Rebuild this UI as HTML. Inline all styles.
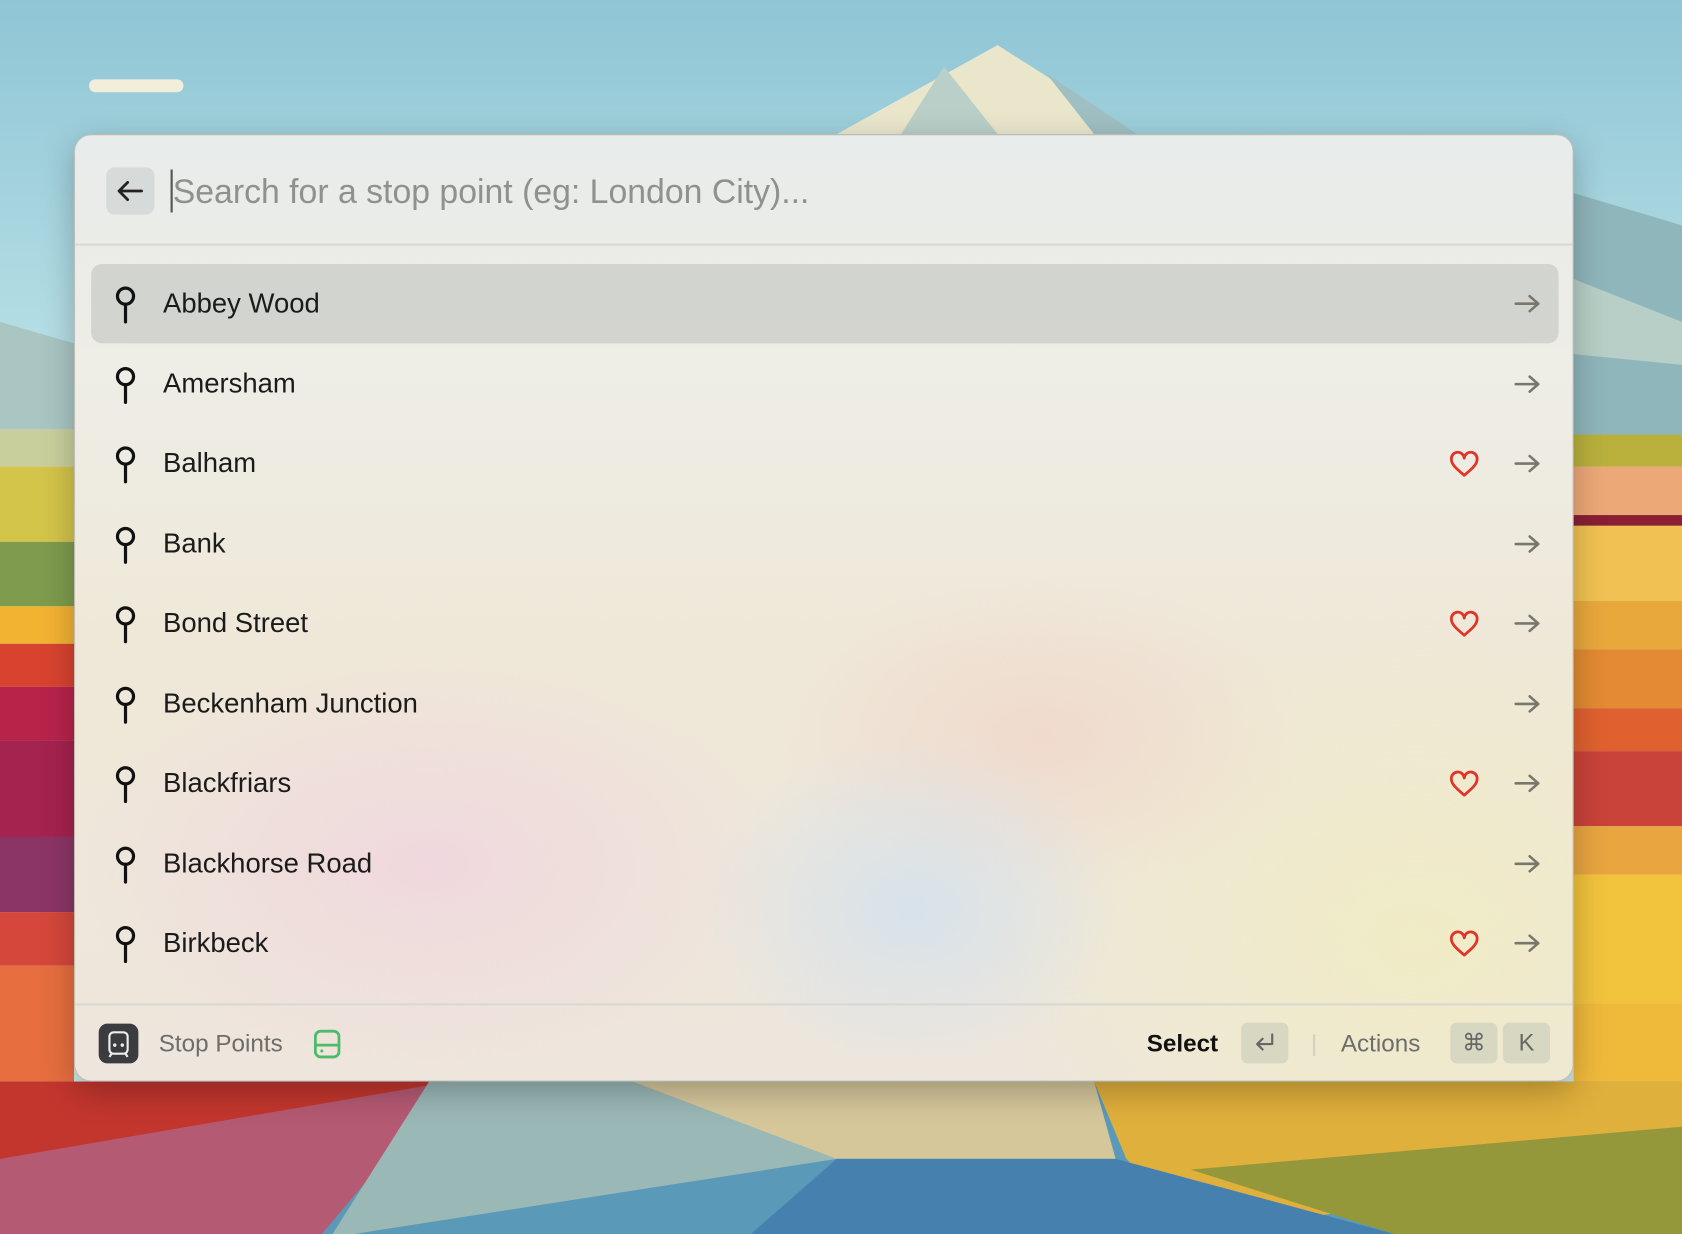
<!DOCTYPE html>
<html><head><meta charset="utf-8"><style>
*{margin:0;padding:0;box-sizing:border-box}
html,body{width:1682px;height:1234px;overflow:hidden;background:#9ccbd6}
#s{width:1568px;height:1150px;transform:scale(1.07270,1.07304);transform-origin:0 0;position:relative;font-family:"Liberation Sans",sans-serif}
svg.bg{position:absolute;left:0;top:0}
.win{position:absolute;left:69px;top:125px;width:1398px;height:883px;border-radius:16px;overflow:hidden;border:1px solid rgba(60,60,60,.25);box-shadow:0 10px 30px rgba(0,0,0,.25);
background:
radial-gradient(ellipse 200px 160px at 780px 720px,rgba(214,226,236,.95),rgba(214,226,236,0)),
radial-gradient(ellipse 330px 200px at 330px 680px,rgba(240,214,222,.9),rgba(240,214,222,0)),
radial-gradient(ellipse 250px 150px at 900px 560px,rgba(240,212,200,.7),rgba(240,212,200,0)),
radial-gradient(ellipse 400px 300px at 1250px 750px,rgba(240,236,196,.95),rgba(240,236,196,0)),
linear-gradient(180deg,#e8ecea 0%,#eeede6 25%,#efe8d8 55%,#eee6dc 100%)}
.hdr{position:absolute;left:0;top:0;width:100%;height:103px;border-bottom:2px solid #d8d8d4}
.back{position:absolute;left:29px;top:30px;width:45px;height:44px;border-radius:8px;background:#d6dad9}
.ph{position:absolute;left:91px;top:32px;font-size:31.5px;color:#8f918f;line-height:40px}
.cur{position:absolute;left:89px;top:32px;width:2px;height:40px;background:#555}
.row{position:absolute;left:15px;width:1368px;height:74px;border-radius:10px}
.row.sel{background:rgba(190,192,188,.55)}
.row svg.pin{position:absolute;left:22px;top:20px}
.row .t{position:absolute;left:67px;top:0;line-height:74px;font-size:25.6px;color:#1b1b1b}
.row svg.ar{position:absolute;left:1326px;top:27px}
.row svg.ht{position:absolute;left:1265px;top:25px}
.ftr{position:absolute;left:0;top:809px;width:100%;height:74px;border-top:2px solid #d9d8d2}
.fi{position:absolute;left:22px;top:17px;width:37px;height:37px;border-radius:8px;background:#3a3c3f}
.ft{position:absolute;top:0;line-height:72px;font-size:22.6px;color:#6d6d6a}
.key{position:absolute;top:16px;height:38px;border-radius:6px;background:#d8d8c2;color:#666;font-size:22px;text-align:center;line-height:38px}
</style></head><body><div id="s">
<svg class="bg" width="1568" height="1150" viewBox="0 0 1568 1150">
<defs><linearGradient id="sky" x1="0" y1="0" x2="0" y2="1"><stop offset="0" stop-color="#8fc5d5"/><stop offset=".3" stop-color="#b8e0e6"/><stop offset=".5" stop-color="#cde9e8"/></linearGradient></defs>
<rect width="1568" height="1150" fill="url(#sky)"/>
<polygon points="780,125 930,42 1060,125" fill="#e9e6cc"/>
<polygon points="880,62 840,125 930,125" fill="#b9cfc8"/>
<polygon points="975,68 1060,125 1020,125" fill="#9fbfc3"/>
<polygon points="1467,180 1568,210 1568,420 1467,420" fill="#8fb6bb"/>
<polygon points="1467,260 1568,300 1568,340 1467,330" fill="#b7cfc6"/>
<rect x="1467" y="405" width="101" height="30" fill="#b9b13c"/>
<rect x="1467" y="435" width="101" height="45" fill="#eda878"/>
<rect x="1467" y="480" width="101" height="10" fill="#8a1f33"/>
<rect x="1467" y="490" width="101" height="70" fill="#f1c253"/>
<rect x="1467" y="560" width="101" height="45" fill="#e9a83c"/>
<rect x="1467" y="605" width="101" height="55" fill="#e38a32"/>
<rect x="1467" y="660" width="101" height="40" fill="#e0612f"/>
<rect x="1467" y="700" width="101" height="70" fill="#c9433a"/>
<rect x="1467" y="770" width="101" height="45" fill="#e9a540"/>
<rect x="1467" y="815" width="101" height="120" fill="#f2c33c"/>
<rect x="1467" y="935" width="101" height="80" fill="#efb93a"/>
<polygon points="0,300 69,320 69,400 0,400" fill="#a9c6c3"/>
<rect x="0" y="400" width="69" height="35" fill="#c9cf9c"/>
<rect x="0" y="435" width="69" height="70" fill="#d3c44a"/>
<rect x="0" y="505" width="69" height="60" fill="#7e9b4e"/>
<rect x="0" y="565" width="69" height="35" fill="#f2b232"/>
<rect x="0" y="600" width="69" height="40" fill="#d8432f"/>
<rect x="0" y="640" width="69" height="50" fill="#b8234a"/>
<rect x="0" y="690" width="69" height="90" fill="#a4234f"/>
<rect x="0" y="780" width="69" height="70" fill="#8b3567"/>
<rect x="0" y="850" width="69" height="50" fill="#d5473b"/>
<rect x="0" y="900" width="69" height="110" fill="#e66e3f"/>
<rect x="0" y="1008" width="1568" height="142" fill="#5a9ab8"/>
<polygon points="0,1008 420,1008 300,1150 0,1150" fill="#b55a73"/>
<polygon points="0,1008 420,1008 0,1080" fill="#c3362e"/>
<polygon points="400,1008 620,1008 780,1080 330,1150 310,1150" fill="#9ab8b6"/>
<polygon points="590,1008 1020,1008 1040,1080 780,1080" fill="#d6c79b"/>
<polygon points="1020,1008 1568,1008 1568,1080 1120,1150 1050,1080" fill="#e0b03c"/>
<polygon points="1110,1090 1568,1050 1568,1150 1300,1150" fill="#94983b"/>
<polygon points="780,1080 1040,1080 1300,1150 700,1150" fill="#4680ae"/>
<rect x="83" y="74" width="88" height="12" rx="6" fill="#f1efdc"/>
</svg>
<div class="win">
 <div class="hdr">
  <div class="back"><svg width="45" height="44" viewBox="0 0 45 44"><path d="M33 22H12M20 14l-8 8 8 8" fill="none" stroke="#222" stroke-width="2.6" stroke-linecap="round" stroke-linejoin="round"/></svg></div>
  <div class="cur"></div>
  <div class="ph">Search for a stop point (eg: London City)...</div>
 </div>
 <div class="row sel" style="top:120px"><svg class="pin" width="20" height="36" viewBox="0 0 20 36"><circle cx="10" cy="10" r="7.5" fill="none" stroke="#111" stroke-width="3"/><path d="M10 17.5V34" stroke="#111" stroke-width="3" stroke-linecap="round"/></svg><div class="t">Abbey Wood</div><svg class="ar" width="26" height="20" viewBox="0 0 26 20"><path d="M2 10h21M15 3l8 7-8 7" fill="none" stroke="#77776e" stroke-width="2.4" stroke-linecap="round" stroke-linejoin="round"/></svg></div>
 <div class="row" style="top:194.5px"><svg class="pin" width="20" height="36" viewBox="0 0 20 36"><circle cx="10" cy="10" r="7.5" fill="none" stroke="#111" stroke-width="3"/><path d="M10 17.5V34" stroke="#111" stroke-width="3" stroke-linecap="round"/></svg><div class="t">Amersham</div><svg class="ar" width="26" height="20" viewBox="0 0 26 20"><path d="M2 10h21M15 3l8 7-8 7" fill="none" stroke="#77776e" stroke-width="2.4" stroke-linecap="round" stroke-linejoin="round"/></svg></div>
 <div class="row" style="top:269px"><svg class="pin" width="20" height="36" viewBox="0 0 20 36"><circle cx="10" cy="10" r="7.5" fill="none" stroke="#111" stroke-width="3"/><path d="M10 17.5V34" stroke="#111" stroke-width="3" stroke-linecap="round"/></svg><div class="t">Balham</div><svg class="ht" width="30" height="26" viewBox="0 0 30 26"><path d="M15 23C8 17 3 13 3 8a6 6 0 0 1 12-1 6 6 0 0 1 12 1c0 5-5 9-12 15z" fill="none" stroke="#e0342a" stroke-width="2.6" stroke-linejoin="round"/></svg><svg class="ar" width="26" height="20" viewBox="0 0 26 20"><path d="M2 10h21M15 3l8 7-8 7" fill="none" stroke="#77776e" stroke-width="2.4" stroke-linecap="round" stroke-linejoin="round"/></svg></div>
 <div class="row" style="top:343.5px"><svg class="pin" width="20" height="36" viewBox="0 0 20 36"><circle cx="10" cy="10" r="7.5" fill="none" stroke="#111" stroke-width="3"/><path d="M10 17.5V34" stroke="#111" stroke-width="3" stroke-linecap="round"/></svg><div class="t">Bank</div><svg class="ar" width="26" height="20" viewBox="0 0 26 20"><path d="M2 10h21M15 3l8 7-8 7" fill="none" stroke="#77776e" stroke-width="2.4" stroke-linecap="round" stroke-linejoin="round"/></svg></div>
 <div class="row" style="top:418px"><svg class="pin" width="20" height="36" viewBox="0 0 20 36"><circle cx="10" cy="10" r="7.5" fill="none" stroke="#111" stroke-width="3"/><path d="M10 17.5V34" stroke="#111" stroke-width="3" stroke-linecap="round"/></svg><div class="t">Bond Street</div><svg class="ht" width="30" height="26" viewBox="0 0 30 26"><path d="M15 23C8 17 3 13 3 8a6 6 0 0 1 12-1 6 6 0 0 1 12 1c0 5-5 9-12 15z" fill="none" stroke="#e0342a" stroke-width="2.6" stroke-linejoin="round"/></svg><svg class="ar" width="26" height="20" viewBox="0 0 26 20"><path d="M2 10h21M15 3l8 7-8 7" fill="none" stroke="#77776e" stroke-width="2.4" stroke-linecap="round" stroke-linejoin="round"/></svg></div>
 <div class="row" style="top:492.5px"><svg class="pin" width="20" height="36" viewBox="0 0 20 36"><circle cx="10" cy="10" r="7.5" fill="none" stroke="#111" stroke-width="3"/><path d="M10 17.5V34" stroke="#111" stroke-width="3" stroke-linecap="round"/></svg><div class="t">Beckenham Junction</div><svg class="ar" width="26" height="20" viewBox="0 0 26 20"><path d="M2 10h21M15 3l8 7-8 7" fill="none" stroke="#77776e" stroke-width="2.4" stroke-linecap="round" stroke-linejoin="round"/></svg></div>
 <div class="row" style="top:567px"><svg class="pin" width="20" height="36" viewBox="0 0 20 36"><circle cx="10" cy="10" r="7.5" fill="none" stroke="#111" stroke-width="3"/><path d="M10 17.5V34" stroke="#111" stroke-width="3" stroke-linecap="round"/></svg><div class="t">Blackfriars</div><svg class="ht" width="30" height="26" viewBox="0 0 30 26"><path d="M15 23C8 17 3 13 3 8a6 6 0 0 1 12-1 6 6 0 0 1 12 1c0 5-5 9-12 15z" fill="none" stroke="#e0342a" stroke-width="2.6" stroke-linejoin="round"/></svg><svg class="ar" width="26" height="20" viewBox="0 0 26 20"><path d="M2 10h21M15 3l8 7-8 7" fill="none" stroke="#77776e" stroke-width="2.4" stroke-linecap="round" stroke-linejoin="round"/></svg></div>
 <div class="row" style="top:641.5px"><svg class="pin" width="20" height="36" viewBox="0 0 20 36"><circle cx="10" cy="10" r="7.5" fill="none" stroke="#111" stroke-width="3"/><path d="M10 17.5V34" stroke="#111" stroke-width="3" stroke-linecap="round"/></svg><div class="t">Blackhorse Road</div><svg class="ar" width="26" height="20" viewBox="0 0 26 20"><path d="M2 10h21M15 3l8 7-8 7" fill="none" stroke="#77776e" stroke-width="2.4" stroke-linecap="round" stroke-linejoin="round"/></svg></div>
 <div class="row" style="top:716px"><svg class="pin" width="20" height="36" viewBox="0 0 20 36"><circle cx="10" cy="10" r="7.5" fill="none" stroke="#111" stroke-width="3"/><path d="M10 17.5V34" stroke="#111" stroke-width="3" stroke-linecap="round"/></svg><div class="t">Birkbeck</div><svg class="ht" width="30" height="26" viewBox="0 0 30 26"><path d="M15 23C8 17 3 13 3 8a6 6 0 0 1 12-1 6 6 0 0 1 12 1c0 5-5 9-12 15z" fill="none" stroke="#e0342a" stroke-width="2.6" stroke-linejoin="round"/></svg><svg class="ar" width="26" height="20" viewBox="0 0 26 20"><path d="M2 10h21M15 3l8 7-8 7" fill="none" stroke="#77776e" stroke-width="2.4" stroke-linecap="round" stroke-linejoin="round"/></svg></div>
 <div class="ftr">
  <div class="fi"><svg width="37" height="37" viewBox="0 0 37 37"><rect x="10" y="8" width="17" height="20" rx="4" fill="none" stroke="#eee" stroke-width="2"/><circle cx="15" cy="20" r="1.6" fill="#eee"/><circle cx="22" cy="20" r="1.6" fill="#eee"/><path d="M12 28l-2 3M25 28l2 3" stroke="#eee" stroke-width="2"/></svg></div>
  <div class="ft" style="left:78px">Stop Points</div>
  <svg style="position:absolute;left:222px;top:22px" width="26" height="28" viewBox="0 0 26 28"><rect x="2" y="2" width="22" height="24" rx="5" fill="none" stroke="#4dbb6a" stroke-width="2.6"/><path d="M2 15h22" stroke="#4dbb6a" stroke-width="2.6"/><circle cx="8" cy="20.5" r="1.4" fill="#4dbb6a"/></svg>
  <div class="ft" style="left:999px;color:#111;font-weight:bold">Select</div>
  <div class="key" style="left:1087px;width:44px"><svg width="24" height="22" viewBox="0 0 24 22" style="margin-top:8px"><path d="M19 3v9H5M10 7l-5 5 5 5" fill="none" stroke="#666" stroke-width="2" stroke-linecap="round" stroke-linejoin="round"/></svg></div>
  <div style="position:absolute;left:1154px;top:27px;width:2px;height:20px;background:#d4d2bf"></div>
  <div class="ft" style="left:1180px">Actions</div>
  <div class="key" style="left:1282px;width:44px">⌘</div>
  <div class="key" style="left:1331px;width:44px">K</div>
 </div>
</div>
</div></body></html>
